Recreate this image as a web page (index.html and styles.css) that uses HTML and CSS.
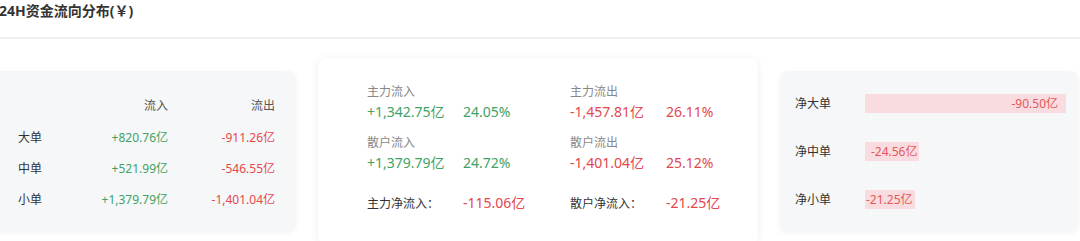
FILE: index.html
```html
<!DOCTYPE html>
<html lang="zh-CN">
<head>
<meta charset="utf-8">
<title>24H资金流向分布</title>
<link rel="stylesheet" href="styles.css">
</head>
<body>
<div class="page">
  <div class="header">
    <h2 class="title">24H资金流向分布(￥)</h2>
  </div>
  <div class="cards">
    <div class="card card-gray card-table">
      <div class="tbl">
        <div class="cell"></div>
        <div class="cell num head">流入</div>
        <div class="cell num head">流出</div>
        <div class="cell lbl">大单</div>
        <div class="cell num up">+820.76亿</div>
        <div class="cell num down">-911.26亿</div>
        <div class="cell lbl">中单</div>
        <div class="cell num up">+521.99亿</div>
        <div class="cell num down">-546.55亿</div>
        <div class="cell lbl">小单</div>
        <div class="cell num up">+1,379.79亿</div>
        <div class="cell num down">-1,401.04亿</div>
      </div>
    </div>

    <div class="card card-white card-flow">
      <div class="flow-grid">
        <div class="flow-item">
          <div class="flow-label">主力流入</div>
          <div class="flow-value up"><span class="amt">+1,342.75亿</span><span>24.05%</span></div>
        </div>
        <div class="flow-item">
          <div class="flow-label">主力流出</div>
          <div class="flow-value down"><span class="amt">-1,457.81亿</span><span>26.11%</span></div>
        </div>
        <div class="flow-item">
          <div class="flow-label">散户流入</div>
          <div class="flow-value up"><span class="amt">+1,379.79亿</span><span>24.72%</span></div>
        </div>
        <div class="flow-item">
          <div class="flow-label">散户流出</div>
          <div class="flow-value down"><span class="amt">-1,401.04亿</span><span>25.12%</span></div>
        </div>
        <div class="net">
          <span class="net-label">主力净流入：</span><span class="net-value down">-115.06亿</span>
        </div>
        <div class="net">
          <span class="net-label">散户净流入：</span><span class="net-value down">-21.25亿</span>
        </div>
      </div>
    </div>

    <div class="card card-gray card-bars">
      <div class="bar-row">
        <span class="bar-label">净大单</span>
        <div class="track"><div class="bar bar-full" style="width:100%">-90.50亿</div></div>
      </div>
      <div class="bar-row">
        <span class="bar-label">净中单</span>
        <div class="track"><div class="bar" style="width:27.1%">-24.56亿</div></div>
      </div>
      <div class="bar-row">
        <span class="bar-label">净小单</span>
        <div class="track"><div class="bar" style="width:23.5%">-21.25亿</div></div>
      </div>
    </div>
  </div>
</div>
</body>
</html>
```

FILE: styles.css
```css
* { box-sizing: border-box; }
html, body { margin: 0; padding: 0; background: #fff; }
body {
  font-family: "Noto Sans", "Noto Sans CJK SC", sans-serif;
  color: #333;
  width: 1080px;
  height: 241px;
  overflow: hidden;
}
.page { width: 1080px; height: 241px; overflow: hidden; }
.header {
  height: 39px;
  border-bottom: 2px solid #f0f0f0;
  display: flex;
  align-items: flex-start;
}
.title {
  margin: 1px 0 0 -1px;
  font-size: 14px;
  font-weight: bold;
  line-height: 20px;
  color: #333;
}
.cards {
  display: flex;
  align-items: center;
  gap: 22px;
  height: 224px;
  margin-left: -15px;
}
.card {
  border-radius: 8px;
  flex: none;
}
.card-gray {
  background: #f6f7f9;
  box-shadow: 0 2px 6px rgba(0,0,0,0.05);
}
.card-white {
  background: #fff;
  box-shadow: 0 1px 8px rgba(0,0,0,0.07);
}
.up { color: #3fa364; }
.down { color: #e4474c; }

/* left table */
.card-table {
  width: 311px;
  height: 160px;
  padding: 18px 21px 18px 33px;
}
.tbl {
  display: grid;
  grid-template-columns: 50px 100px 107px;
  grid-template-rows: 33px;
  grid-auto-rows: 31px;
  font-size: 12px;
  align-items: center;
}
.cell { line-height: 18px; white-space: nowrap; }
.num { text-align: right; }
.head { color: #555; }
.lbl { color: #333; }

/* middle */
.card-flow {
  width: 440px;
  height: 186px;
  padding: 25px 20px 0 49px;
}
.flow-grid {
  display: grid;
  grid-template-columns: 203px 1fr;
  row-gap: 11px;
}
.flow-label {
  font-size: 12px;
  line-height: 18px;
  color: #888;
}
.flow-value {
  font-size: 14px;
  line-height: 22px;
  white-space: nowrap;
}
.amt { display: inline-block; width: 96px; }
.net {
  margin-top: 6px;
  line-height: 22px;
  white-space: nowrap;
}
.net-label {
  display: inline-block;
  width: 96px;
  font-size: 12px;
  color: #333;
}
.net-value { font-size: 14px; }

/* right */
.card-bars {
  width: 298px;
  height: 160px;
  padding: 8px 12px 8px 15px;
}
.bar-row {
  display: flex;
  align-items: center;
  height: 48px;
}
.bar-label {
  width: 70px;
  font-size: 12px;
  color: #333;
}
.track {
  flex: 1;
  display: flex;
}
.bar {
  min-width: max-content;
  height: 19px;
  line-height: 19px;
  background: #f9dcdf;
  color: #e4575b;
  font-size: 12px;
  text-align: right;
  padding: 0 2px 0 1px;
  white-space: nowrap;
}
.bar-full { padding-right: 8px; }
```
